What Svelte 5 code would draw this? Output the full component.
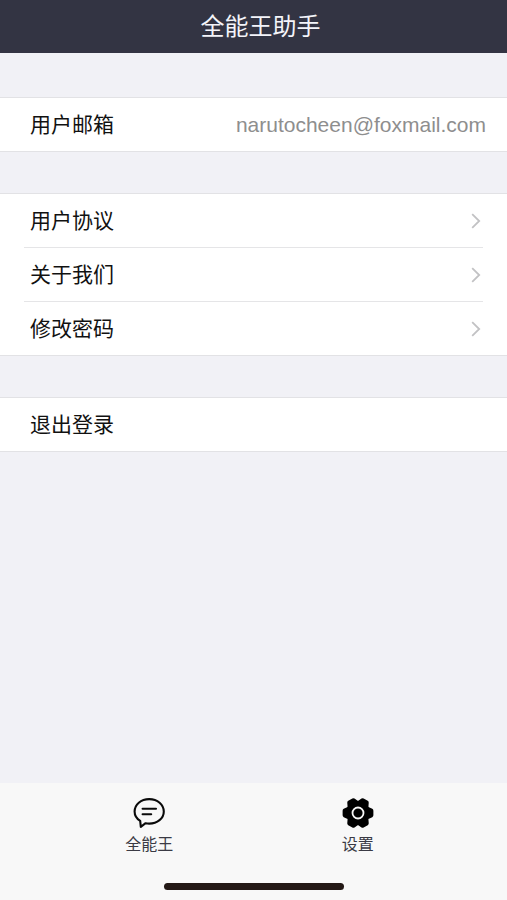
<script lang="ts">
	const email = 'narutocheen@foxmail.com';

	const links = [
		{ label: '用户协议', href: '#agreement' },
		{ label: '关于我们', href: '#about' },
		{ label: '修改密码', href: '#password' }
	];

	function polar(angle: number, radius: number) {
		const rad = (angle * Math.PI) / 180;
		return `${(17 + radius * Math.cos(rad)).toFixed(2)},${(17 + radius * Math.sin(rad)).toFixed(2)}`;
	}

	// outline of the gear: six wide teeth with shallow gaps between them
	const gear = [0, 60, 120, 180, 240, 300]
		.map((a) => [polar(a - 10, 13.6), polar(a + 10, 13.6), polar(a + 24, 10.4), polar(a + 36, 10.4)].join(' '))
		.join(' ');
</script>

<div class="page">
	<header class="nav-bar">
		<h1>全能王助手</h1>
	</header>

	<main>
		<section class="group">
			<div class="row">
				<span>用户邮箱</span>
				<span class="email">{email}</span>
			</div>
		</section>

		<nav class="group links">
			{#each links as link}
				<a class="row" href={link.href}>
					{link.label}
					<svg class="chevron" viewBox="0 0 10 16" width="10" height="16" aria-hidden="true">
						<path d="M1.2 1.2L8.2 8L1.2 14.8" />
					</svg>
				</a>
			{/each}
		</nav>

		<section class="group">
			<button class="row" type="button">退出登录</button>
		</section>
	</main>

	<footer class="tab-bar">
		<nav class="tabs">
			<a class="tab" href="#chat">
				<svg viewBox="0 0 34 34" width="34" height="34" aria-hidden="true">
					<path
						class="line"
						d="M8.2 24.9C4.6 22.7 2.6 19.4 2.6 15.5C2.6 8.5 8.9 3.1 17.2 3.1S31.8 8.5 31.8 15.5S25.3 27.6 17.2 27.6C15.9 27.6 14.7 27.5 13.6 27.2L8.8 30.8Z"
					/>
					<path class="line" d="M10.6 12.8H24M10.6 18.2H19.2" />
				</svg>
				<span>全能王</span>
			</a>
			<a class="tab" href="#settings">
				<svg viewBox="0 0 34 34" width="34" height="34" aria-hidden="true">
					<polygon class="gear" points={gear} />
					<circle class="ring" cx="17" cy="17" r="5.5" />
				</svg>
				<span>设置</span>
			</a>
		</nav>
		<div class="home-indicator"></div>
	</footer>
</div>

<style>
	:global(body) {
		margin: 0;
		background-color: #f1f1f6;
	}

	.page {
		min-height: 100vh;
		display: flex;
		flex-direction: column;
		background-color: #f1f1f6;
		color: #111;
		font-family: 'Liberation Sans', 'Noto Sans CJK SC', sans-serif;
		font-size: 21px;
	}

	.nav-bar {
		height: 53px;
		display: flex;
		justify-content: center;
		align-items: center;
		padding-left: 14px;
		background-color: #333443;
	}

	h1 {
		margin: 0;
		color: #f4f4fa;
		font-size: 24px;
		font-weight: 400;
		line-height: 32px;
	}

	main {
		flex: 1;
		display: flex;
		flex-direction: column;
		gap: 41px;
		padding: 44px 0;
	}

	.group {
		background-color: #fff;
		border-top: 1px solid #e2e2e5;
		border-bottom: 1px solid #e2e2e5;
	}

	.links {
		padding: 0 24px;
	}

	.row {
		box-sizing: border-box;
		width: 100%;
		height: 53px;
		display: flex;
		justify-content: space-between;
		align-items: center;
		padding: 0 21px 0 30px;
		border: none;
		background: none;
		color: inherit;
		font: inherit;
		line-height: 30px;
		text-align: left;
		text-decoration: none;
		cursor: pointer;
	}

	.links .row {
		padding: 0 2px 0 6px;
	}

	.links .row + .row {
		height: 54px;
		border-top: 1px solid #e5e5e7;
	}

	div.row {
		cursor: default;
	}

	.email {
		color: #8e8e8e;
	}

	.chevron {
		fill: none;
		stroke: #c2c2c4;
		stroke-width: 1.8;
	}

	.tab-bar {
		display: flex;
		flex-direction: column;
		align-items: center;
		padding: 13px 0 10px;
		background-color: #f8f8f8;
	}

	.tabs {
		align-self: stretch;
		display: flex;
		padding: 0 45px;
	}

	.tab {
		flex: 1;
		display: flex;
		flex-direction: column;
		align-items: center;
		gap: 3px;
		color: #3a3a44;
		font-size: 16px;
		line-height: 24px;
		text-decoration: none;
	}

	.tab .line {
		fill: none;
		stroke: #0a0a0a;
		stroke-width: 2.1;
		stroke-linecap: round;
		stroke-linejoin: round;
	}

	.tab .gear {
		fill: #000;
		stroke: #000;
		stroke-width: 4;
		stroke-linejoin: round;
	}

	.tab .ring {
		fill: none;
		stroke: #f8f8f8;
		stroke-width: 1.8;
	}

	.home-indicator {
		width: 180px;
		height: 7px;
		margin-top: 26px;
		border-radius: 4px;
		background-color: #231815;
	}
</style>
